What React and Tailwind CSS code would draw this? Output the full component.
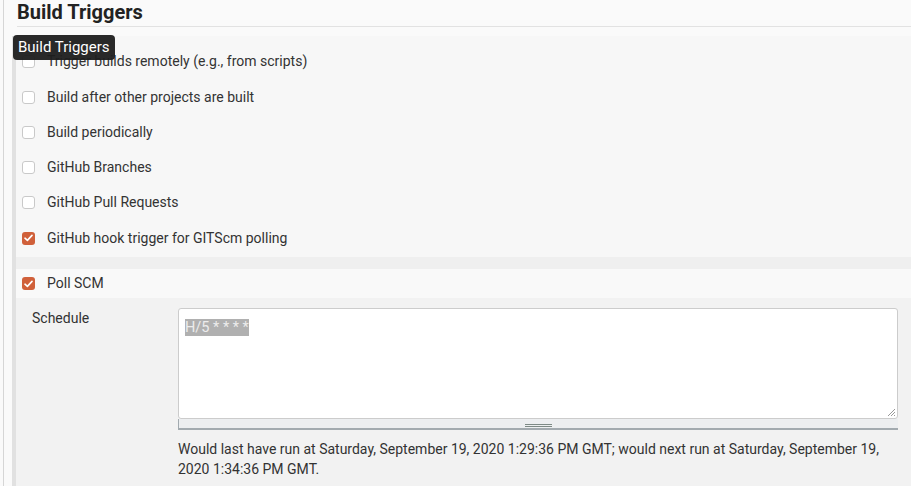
const triggers = [
  { label: 'Trigger builds remotely (e.g., from scripts)', h: 'h-[36px]' },
  { label: 'Build after other projects are built', h: 'h-[36px]' },
  { label: 'Build periodically', h: 'h-[35px]' },
  { label: 'GitHub Branches', h: 'h-[35px]' },
  { label: 'GitHub Pull Requests', h: 'h-[34px]' },
  { label: 'GitHub hook trigger for GITScm polling', h: 'h-[38px]', checked: true },
];

const Checkbox = ({ checked }) =>
  checked ? (
    <span className="flex items-center justify-center w-[13px] h-[13px] rounded-[3px] bg-[#d0603a] shrink-0">
      <svg width="9" height="8" viewBox="0 0 9 8" fill="none">
        <path d="M1 4.2 L3.4 6.4 L8 1.4" stroke="white" strokeWidth="1.6" strokeLinecap="round" strokeLinejoin="round" />
      </svg>
    </span>
  ) : (
    <span className="w-[13px] h-[13px] rounded-[3px] border border-[#c9c9c9] bg-white shrink-0" />
  );

const Row = ({ label, checked, h }) => (
  <div className={`flex items-center ${h} pl-[6px]`}>
    <Checkbox checked={checked} />
    <span className="ml-[12px] text-[14px] text-[#333]">{label}</span>
  </div>
);

export default function App() {
  return (
    <div
      className="relative w-[911px] h-[486px] overflow-hidden bg-[#fafafa] flex"
      style={{ fontFamily: 'Roboto, "Liberation Sans", sans-serif' }}
    >
      <div className="w-[3px] shrink-0" />
      <div className="w-[1px] shrink-0 bg-[#d6d6d6]" />
      <div className="flex-1 flex flex-col">
        {/* Header */}
        <div className="ml-[13px] h-[27px] border-b border-[#e2e2e2] flex items-center">
          <h2 className="text-[20px] font-bold text-[#222] leading-none -mt-[2px]">Build Triggers</h2>
        </div>
        <div className="h-[9px]" />

        <div className="flex flex-1">
          <div className="w-[8px] shrink-0" />
          <div className="w-[4px] shrink-0 bg-[#e1e1e1]" />
          <div className="flex-1 flex flex-col">
            <div className="h-[7px] bg-[#f7f7f7]" />
            <div className="bg-[#f7f7f7]">
              {triggers.map((t) => (
                <Row key={t.label} {...t} />
              ))}
            </div>
            <div className="h-[12px] bg-[#efefef]" />
            <div className="h-[29px] bg-[#f9f9f9]">
              <Row label="Poll SCM" checked h="h-[29px]" />
            </div>

            {/* Schedule */}
            <div className="flex-1 bg-[#f2f2f2] flex">
              <div className="w-[162px] shrink-0 pl-[16px] pt-[10px] text-[14px] text-[#333]">Schedule</div>
              <div className="flex flex-col pt-[10px] w-[720px]">
                <div className="relative h-[111px] bg-white border border-[#cccccc] rounded-[3px] px-[6px] pt-[6px]">
                  <span className="bg-[#b0b0b0] text-[#ececec] text-[14.5px] leading-[17px] inline-block">H/5 * * * *</span>
                  <svg className="absolute right-[1px] bottom-[1px]" width="10" height="10" viewBox="0 0 10 10">
                    <path d="M9 2 L2 9 M9 5 L5 9 M9 8 L8 9" stroke="#999" strokeWidth="1" />
                  </svg>
                </div>
                <div className="relative h-[11px] bg-[#eceef0] border-b-2 border-l border-[#a2aaaf] flex justify-center items-end pb-[1px]">
                  <div className="w-[27px] flex flex-col gap-[1px]">
                    <div className="h-[1px] bg-[#7d8a86]" />
                    <div className="h-[1px] bg-[#7d8a86]" />
                  </div>
                </div>
                <p className="mt-[9px] text-[14px] leading-[20px] text-[#333]">
                  Would last have run at Saturday, September 19, 2020 1:29:36 PM GMT; would next run at Saturday, September 19, 2020 1:34:36 PM GMT.
                </p>
              </div>
            </div>
          </div>
        </div>
      </div>

      {/* Tooltip */}
      <div className="absolute left-[13px] top-[35px] h-[25px] px-[5px] flex items-center rounded-[4px] bg-[#1e1e1e]/95 text-white text-[15px]">
        Build Triggers
      </div>
    </div>
  );
}
